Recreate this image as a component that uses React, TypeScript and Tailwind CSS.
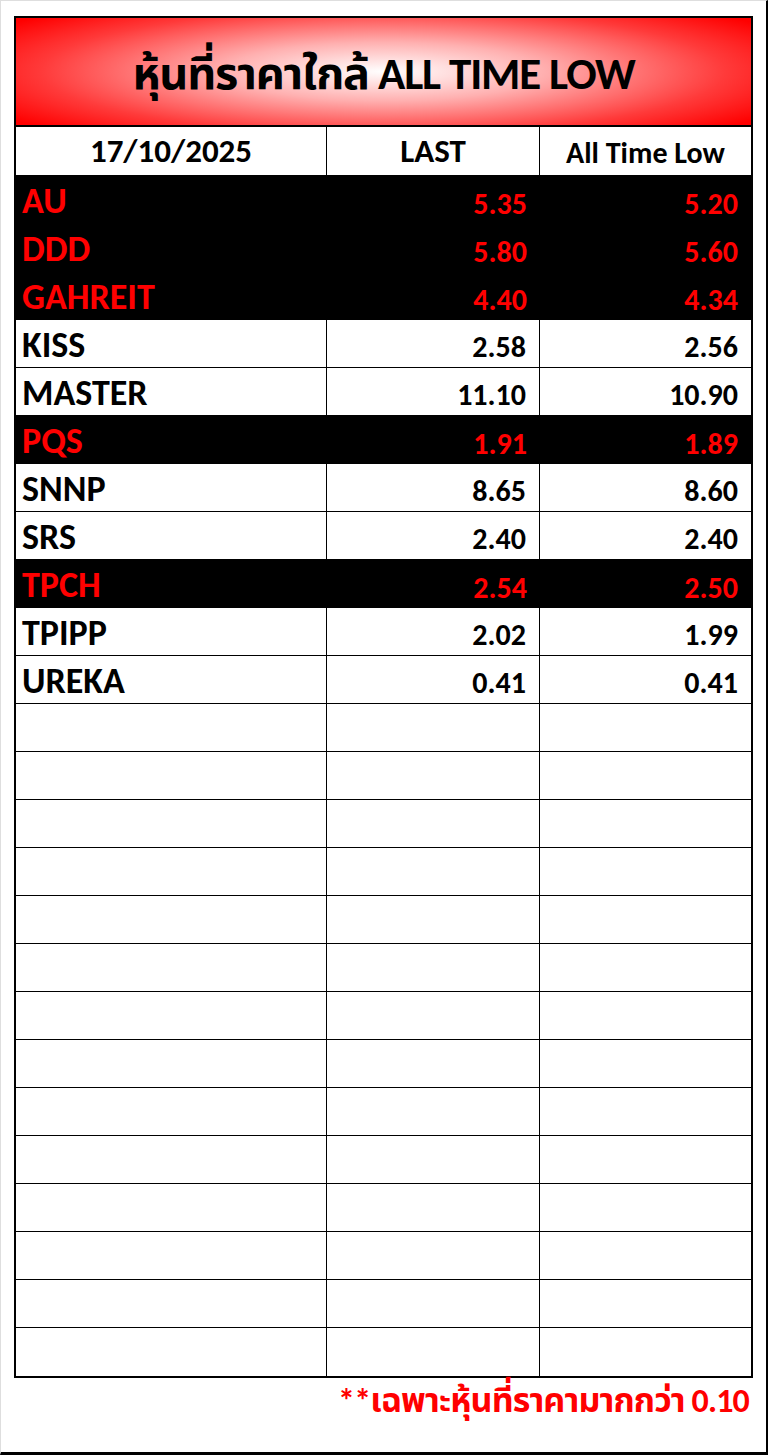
import React from 'react';

type Row = { sym: string; last: string; low: string; hot?: boolean };

const ROWS: Row[] = [
  { sym: 'AU', last: '5.35', low: '5.20', hot: true },
  { sym: 'DDD', last: '5.80', low: '5.60', hot: true },
  { sym: 'GAHREIT', last: '4.40', low: '4.34', hot: true },
  { sym: 'KISS', last: '2.58', low: '2.56' },
  { sym: 'MASTER', last: '11.10', low: '10.90' },
  { sym: 'PQS', last: '1.91', low: '1.89', hot: true },
  { sym: 'SNNP', last: '8.65', low: '8.60' },
  { sym: 'SRS', last: '2.40', low: '2.40' },
  { sym: 'TPCH', last: '2.54', low: '2.50', hot: true },
  { sym: 'TPIPP', last: '2.02', low: '1.99' },
  { sym: 'UREKA', last: '0.41', low: '0.41' },
];

const EMPTY = 14;

export default function App() {
  return (
    <div
      className="w-[768px] h-[1455px] bg-white border-t border-l border-[#dedede] border-r-[2px] border-b-[3px] border-r-black border-b-black overflow-hidden"
      style={{ fontFamily: 'Carlito, Calibri, Lato, "Noto Sans Thai", "Noto Sans", sans-serif' }}
    >
      <div className="ml-[13px] mt-[15px] w-[739px]">
        {/* ── Title banner ─────────────────────────────── */}
        <div className="h-[111px] border-2 border-black flex items-center justify-center bg-[radial-gradient(ellipse_62%_78%_at_50%_50%,#ffffff_0%,#ffb0b0_35%,#ff3a3a_75%,#ff0000_100%)]">
          <span className="text-[45px] font-bold text-black tracking-tight pt-1">หุ้นที่ราคาใกล้ ALL TIME LOW</span>
        </div>

        {/* ── Table ────────────────────────────────────── */}
        <div className="border-x-2 border-b-2 border-black">
          <div className="flex h-[49px] border-b border-black text-black font-bold">
            <div className="w-[311px] border-r border-black flex items-center justify-center text-[33px] pt-[2px]">17/10/2025</div>
            <div className="w-[213px] border-r border-black flex items-center justify-center text-[33px] pt-[2px]">LAST</div>
            <div className="flex-1 flex items-center justify-center text-[30px] pt-[2px]">All Time Low</div>
          </div>

          {ROWS.map(r => (
            <div
              key={r.sym}
              className={`flex h-[48px] font-bold ${r.hot ? 'bg-black text-[#ff0000]' : 'bg-white text-black border-b border-black'}`}
            >
              <div className={`w-[311px] flex items-center pl-[6px] pt-[2px] text-[36px] ${r.hot ? '' : 'border-r border-black'}`}>{r.sym}</div>
              <div className={`w-[213px] flex items-center justify-end pr-[13px] pt-[6px] text-[30px] ${r.hot ? '' : 'border-r border-black'}`}>{r.last}</div>
              <div className="flex-1 flex items-center justify-end pr-[13px] pt-[6px] text-[30px]">{r.low}</div>
            </div>
          ))}

          {Array.from({ length: EMPTY }).map((_, i) => (
            <div key={i} className={`flex h-[48px] ${i < EMPTY - 1 ? 'border-b border-black' : ''}`}>
              <div className="w-[311px] border-r border-black" />
              <div className="w-[213px] border-r border-black" />
              <div className="flex-1" />
            </div>
          ))}
        </div>

        {/* ── Footnote ─────────────────────────────────── */}
        <div className="flex justify-end pr-[4px] -mt-[3px]">
          <span className="text-[34px] font-bold text-[#ff0000] tracking-tight">**เฉพาะหุ้นที่ราคามากกว่า 0.10</span>
        </div>
      </div>
    </div>
  );
}
